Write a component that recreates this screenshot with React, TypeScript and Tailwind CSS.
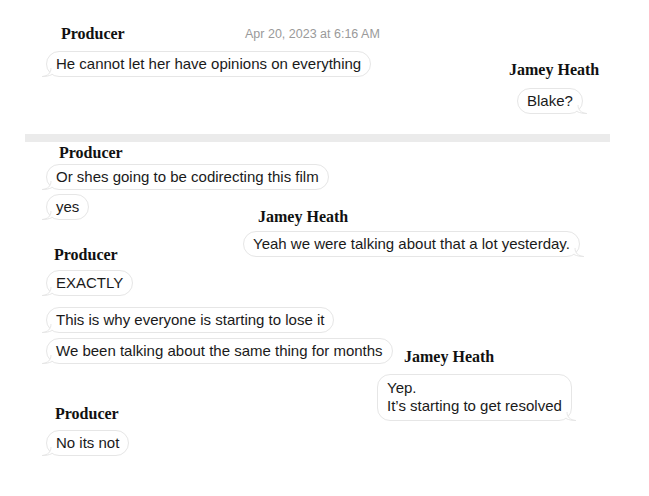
import { ReactNode } from "react";

const serif = "font-['Liberation_Serif',serif]";

function Name({ children, className = "" }: { children: ReactNode; className?: string }) {
    return <div className={`${serif} font-bold text-[16px] leading-[18px] text-[#111] ${className}`}>{children}</div>;
}

function Bubble({ children, side = "left", className = "", inner = "py-[3px]" }: { children: ReactNode; side?: "left" | "right"; className?: string; inner?: string }) {
    return (
        <div className={`relative w-fit ${className}`}>
            <div className={`relative z-10 rounded-[13px] border border-[#e6e6e6] bg-white px-[9px] text-[15px] leading-[18px] text-[#1a1a1a] whitespace-nowrap ${inner}`}>
                {children}
            </div>
            {side === "left" ? (
                <svg className="absolute -left-[4px] bottom-[0px] z-20" width="10" height="9" viewBox="0 0 10 9">
                    <path d="M9 0 C9 5 6 8 0 8.5 C4 8.5 7 8 10 6.5" fill="#fff" stroke="#e6e6e6" strokeWidth="1" />
                </svg>
            ) : (
                <svg className="absolute -right-[4px] bottom-[0px] z-20" width="10" height="9" viewBox="0 0 10 9">
                    <path d="M1 0 C1 5 4 8 10 8.5 C6 8.5 3 8 0 6.5" fill="#fff" stroke="#e6e6e6" strokeWidth="1" />
                </svg>
            )}
        </div>
    );
}

export default function App() {
    return (
        <div className="w-[649px] h-[496px] overflow-hidden bg-white font-['Liberation_Sans',Arial,sans-serif]">
            {/* first screenshot */}
            <div className="flex items-center pt-[25px] pl-[61px]">
                <Name className="w-[184px]">Producer</Name>
                <span className="text-[12.5px] text-[#9a9a9a]">Apr 20, 2023 at 6:16 AM</span>
            </div>
            <div className="flex items-start mt-[7px]">
                <div className="ml-[46px] w-[463px]">
                    <Bubble>He cannot let her have opinions on everything</Bubble>
                </div>
                <Name className="mt-[10px]">Jamey Heath</Name>
            </div>
            <div className="flex mt-[9px]">
                <Bubble side="right" className="ml-[517px]">Blake?</Bubble>
            </div>

            <div className="mt-[20px] ml-[25px] w-[585px] h-[8px] bg-[#ebebeb]" />

            {/* second screenshot */}
            <Name className="ml-[59px] mt-[2px]">Producer</Name>
            <Bubble className="ml-[46px] mt-[2px]">Or shes going to be codirecting this film</Bubble>
            <div className="flex mt-[4px]">
                <div className="flex flex-col ml-[46px] w-[197px]">
                    <Bubble>yes</Bubble>
                    <Name className="ml-[8px] mt-[26px]">Producer</Name>
                    <Bubble className="mt-[6px]">EXACTLY</Bubble>
                </div>
                <div className="flex flex-col mt-[14px]">
                    <Name className="ml-[15px]">Jamey Heath</Name>
                    <Bubble side="right" className="mt-[5px]">Yeah we were talking about that a lot yesterday.</Bubble>
                </div>
            </div>

            {/* third screenshot */}
            <Bubble className="ml-[46px] mt-[11px]">This is why everyone is starting to lose it</Bubble>
            <div className="flex items-start mt-[5px]">
                <div className="ml-[46px] w-[358px]">
                    <Bubble>We been talking about the same thing for months</Bubble>
                </div>
                <Name className="mt-[10px]">Jamey Heath</Name>
            </div>
            <div className="flex mt-[8px]">
                <div className="flex flex-col w-[377px]">
                    <Name className="ml-[55px] mt-[31px]">Producer</Name>
                    <Bubble className="ml-[46px] mt-[7px]">No its not</Bubble>
                </div>
                <Bubble side="right" className="self-start" inner="pt-[4px] pb-[5px] leading-[18px]">
                    <div>Yep.</div>
                    <div>It’s starting to get resolved</div>
                </Bubble>
            </div>
        </div>
    );
}
